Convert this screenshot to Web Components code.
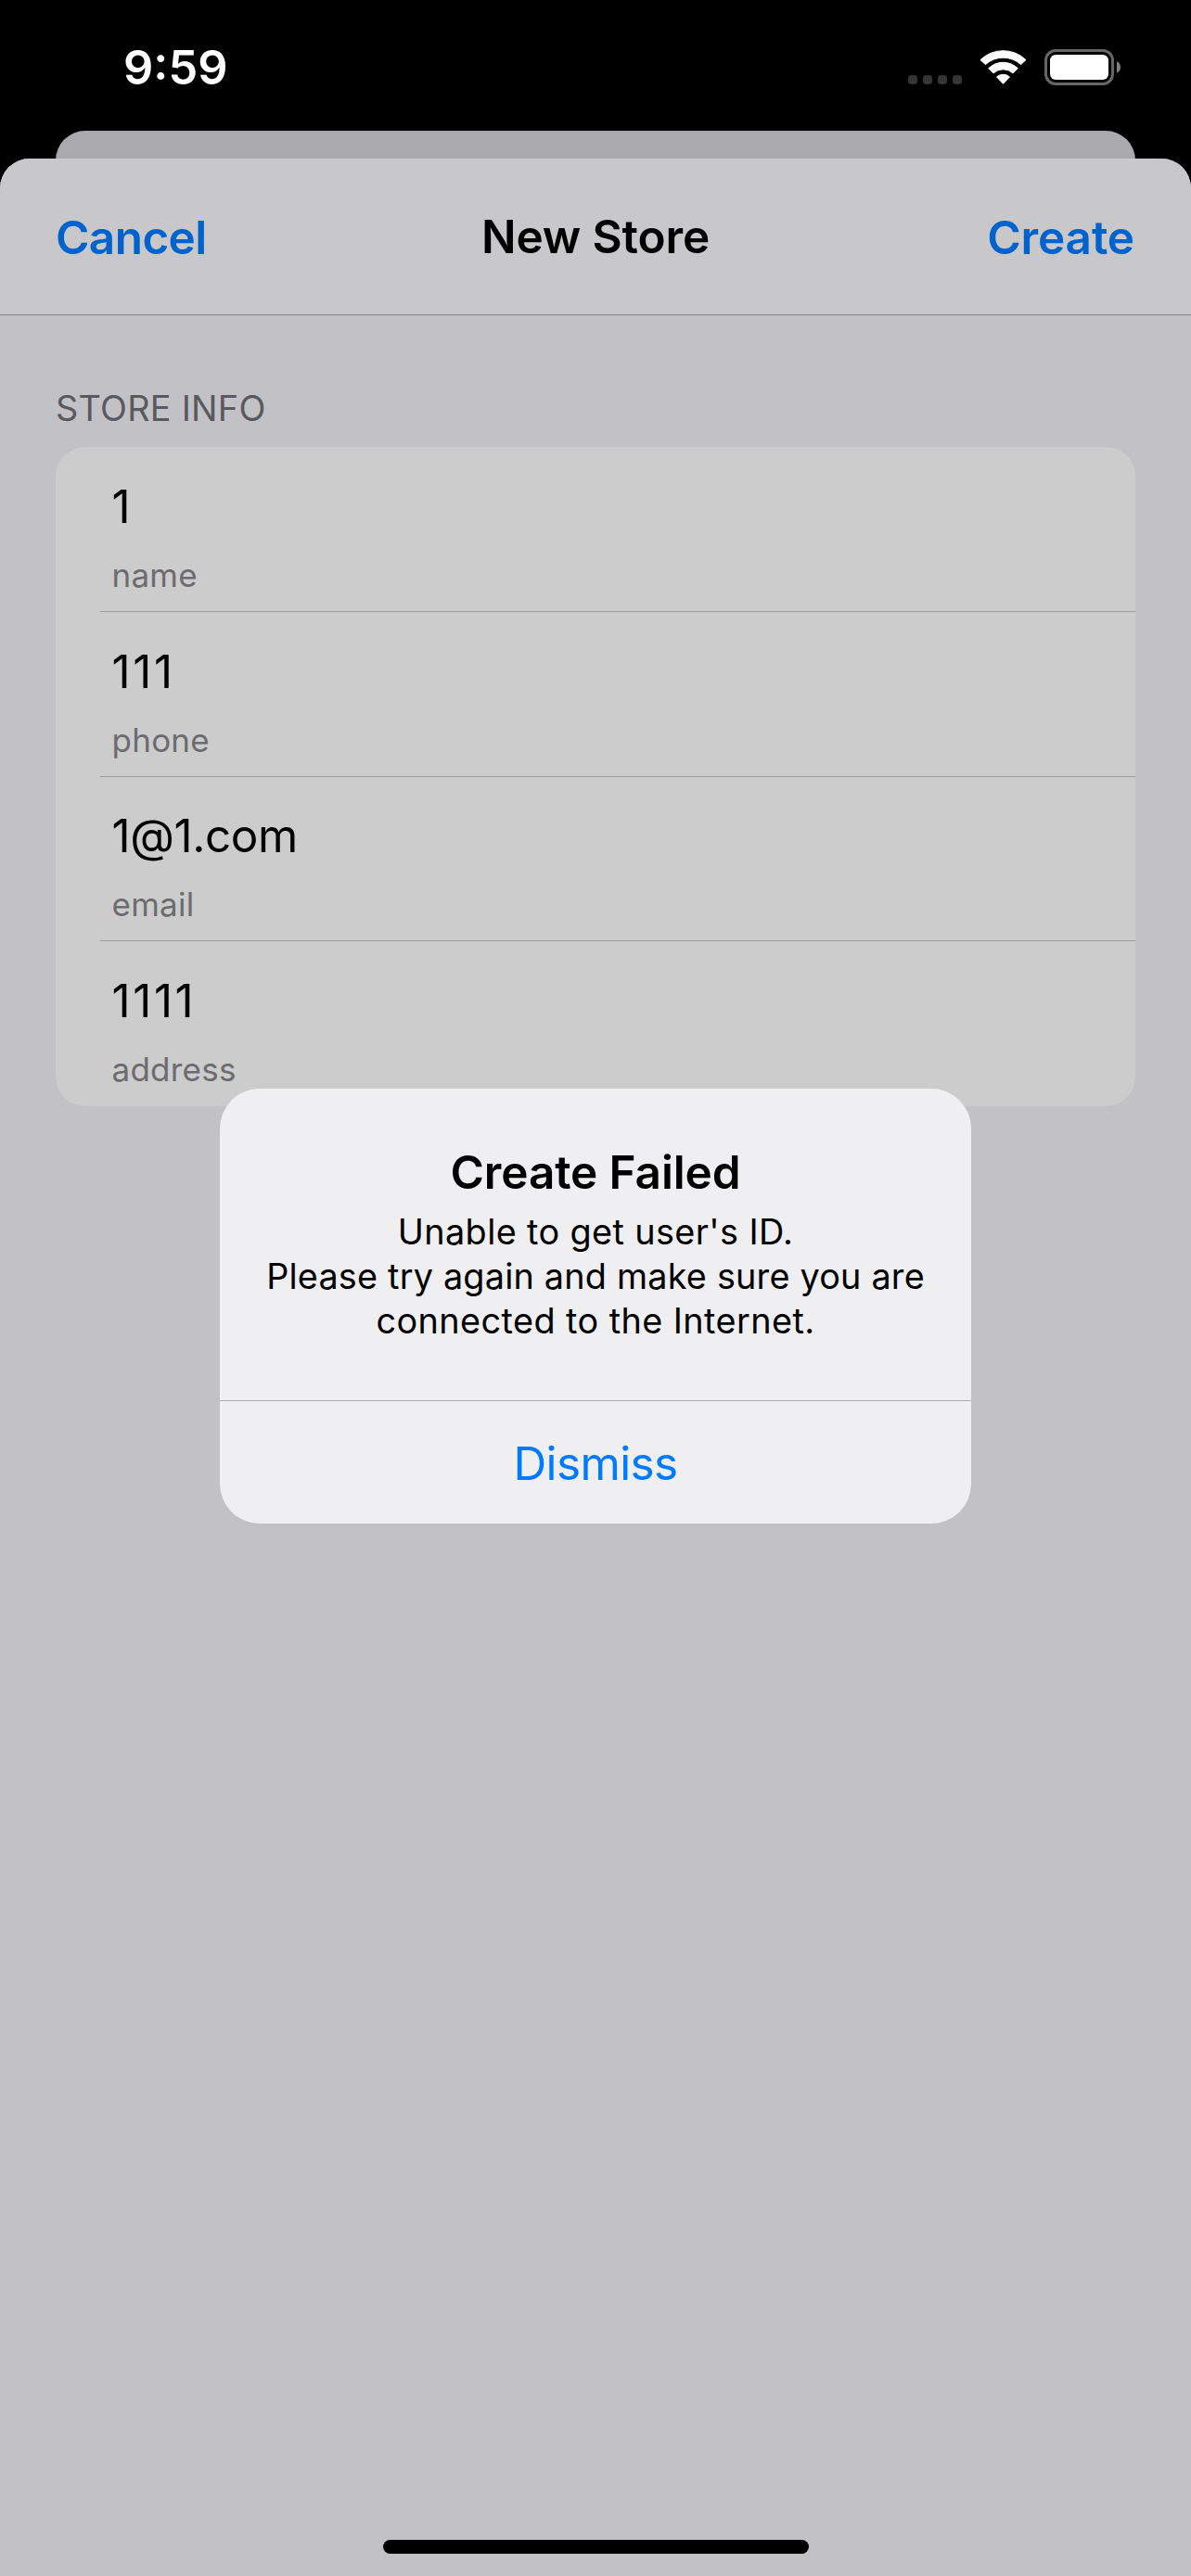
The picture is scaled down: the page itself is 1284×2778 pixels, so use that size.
<!DOCTYPE html>
<html lang="en">
<head>
<meta charset="utf-8">
<title>New Store</title>
<style>
html,body{margin:0;padding:0;background:#000}
body{width:1284px;height:2778px;overflow:hidden;position:relative;font-family:Inter,"Liberation Sans",sans-serif;color:#000}
</style>
</head>
<body>
<phone-screen>
  <status-bar slot="status" time="9:59"></status-bar>
  <nav-bar slot="nav">
    <span slot="left">Cancel</span>
    <span slot="title">New Store</span>
    <span slot="right">Create</span>
  </nav-bar>
  <form-section heading="Store Info">
    <form-row value="1" label="name"></form-row>
    <form-row value="111" label="phone" numeric></form-row>
    <form-row value="1@1.com" label="email" compact></form-row>
    <form-row value="1111" label="address" numeric last></form-row>
  </form-section>
  <alert-dialog slot="alert" heading="Create Failed" action="Dismiss">
    <div style="letter-spacing:.38px">Unable to get user's ID.</div>
    <div style="letter-spacing:.2px">Please try again and make sure you are</div>
    <div style="letter-spacing:.43px">connected to the Internet.</div>
  </alert-dialog>
</phone-screen>
<script>
class Base extends HTMLElement{
  connectedCallback(){
    if(this.shadowRoot) return;
    this.attachShadow({mode:'open'}).innerHTML=this.render();
  }
  a(n){return this.getAttribute(n)||''}
}

customElements.define('status-bar',class extends Base{
  render(){return `<style>
    :host{display:flex;justify-content:space-between;height:141px;box-sizing:border-box;padding:43px 76px 0 133px;color:#fff}
    .time{font-size:50.5px;font-weight:600;line-height:60px;letter-spacing:0}
    .icons{display:block;width:229px;height:39px;margin-top:10px}
    </style>
    <div class="time">${this.a('time')}</div>
    <svg class="icons" viewBox="979 53 229 39">
      <g fill="#333"><rect x="979" y="81" width="10" height="10" rx="3.4"/><rect x="995" y="81" width="10" height="10" rx="3.4"/><rect x="1011" y="81" width="10" height="10" rx="3.4"/><rect x="1027" y="81" width="10" height="10" rx="3.4"/></g>
      <g fill="#fff" stroke="#fff" stroke-width="1" stroke-linejoin="round">
        <path d="M1057 64.6A35.2 35.2 0 0 1 1106 64.6L1100.6 69.6A28.3 28.3 0 0 0 1062.4 69.6Z"/>
        <path d="M1065.7 73.7A22.6 22.6 0 0 1 1097.3 73.7L1092 78.9A15.6 15.6 0 0 0 1071 78.9Z"/>
        <path d="M1074.5 82.9A10.6 10.6 0 0 1 1088.5 82.9L1081.5 90.3Z"/>
      </g>
      <rect x="1127.5" y="54.5" width="72" height="36" rx="10.5" fill="none" stroke="#666" stroke-width="3"/>
      <rect x="1132" y="59" width="63" height="27" rx="6.2" fill="#fff"/>
      <path d="M1204 66.3C1206.7 67.5 1208 69.8 1208 72.5S1206.7 77.5 1204 78.7Z" fill="#808080"/>
    </svg>`}
});

customElements.define('nav-bar',class extends Base{
  render(){return `<style>
    :host{display:grid;grid-template-columns:1fr auto 1fr;height:169px;box-sizing:border-box;padding:55px 60px 0;background:#c8c8ca;border-bottom:1px solid #88888b;font-size:49.5px;font-weight:600;line-height:60px}
    .side{color:#0062cc}
    .l{letter-spacing:-.6px}
    .r{text-align:right;letter-spacing:-.1px;padding-right:1px}
    .t{letter-spacing:-.13px;margin-top:-1px}
    </style>
    <div class="side l"><slot name="left"></slot></div>
    <div class="t"><slot name="title"></slot></div>
    <div class="side r"><slot name="right"></slot></div>`}
});

customElements.define('form-row',class extends Base{
  render(){
    const c=this.hasAttribute('compact'),n=this.hasAttribute('numeric'),last=this.hasAttribute('last');
    return `<style>
    :host{display:block;height:${c?177:178}px;padding-left:48px}
    .cell{height:100%;box-sizing:border-box;padding:${c?33:34}px 0 0 12.5px;${last?'':'border-bottom:1px solid #9b9b9d'}}
    .value{font-size:49.4px;line-height:60px;letter-spacing:${n?2.6:c?-.4:0}px}
    .label{margin-top:23px;font-size:35px;line-height:42px;color:#6c6c70;letter-spacing:.25px}
    </style>
    <div class="cell"><div class="value">${this.a('value')}</div><div class="label">${this.a('label')}</div></div>`}
});

customElements.define('form-section',class extends Base{
  render(){return `<style>
    :host{display:flex;flex-direction:column;gap:18px;padding:76px 60px 0}
    .head{font-size:37.8px;line-height:48px;letter-spacing:.26px;color:#59595e;text-transform:uppercase}
    .card{background:#ccc;border-radius:32px;overflow:hidden}
    </style>
    <div class="head">${this.a('heading')}</div>
    <div class="card"><slot></slot></div>`}
});

customElements.define('alert-dialog',class extends Base{
  render(){return `<style>
    :host{display:block;width:810px;background:#efeff1;border-radius:43px;overflow:hidden;text-align:center}
    .body{height:336px;box-sizing:border-box;padding-top:60px}
    .title{font-size:49.5px;font-weight:600;line-height:60px;letter-spacing:-.12px}
    .msg{margin-top:10px;font-size:37.8px;line-height:48px;white-space:nowrap}
    .action{height:133px;box-sizing:border-box;padding-top:37px;border-top:1px solid #b0b0b3;color:#007aff;font-size:49.5px;line-height:60px;letter-spacing:-.6px}
    </style>
    <div class="body"><div class="title">${this.a('heading')}</div><div class="msg"><slot></slot></div></div>
    <div class="action">${this.a('action')}</div>`}
});

customElements.define('phone-screen',class extends Base{
  render(){return `<style>
    :host{display:flex;flex-direction:column;width:1284px;height:2778px;background:#000}
    .behind{height:62px;margin:0 60px -32px;background:#aaa9ae;border-radius:32px 32px 0 0;flex:none}
    .sheet{display:flex;flex-direction:column;flex:1;background:#c2c1c6;border-radius:32px 32px 0 0;overflow:hidden;position:relative}
    .home{width:459px;height:15px;border-radius:7.5px;background:#000;margin:auto auto 24px}
    .overlay{position:absolute;left:237px;top:1174px}
    </style>
    <slot name="status"></slot>
    <div class="behind"></div>
    <div class="sheet"><slot name="nav"></slot><slot></slot><div class="home"></div></div>
    <div class="overlay"><slot name="alert"></slot></div>`}
});
</script>
</body>
</html>
